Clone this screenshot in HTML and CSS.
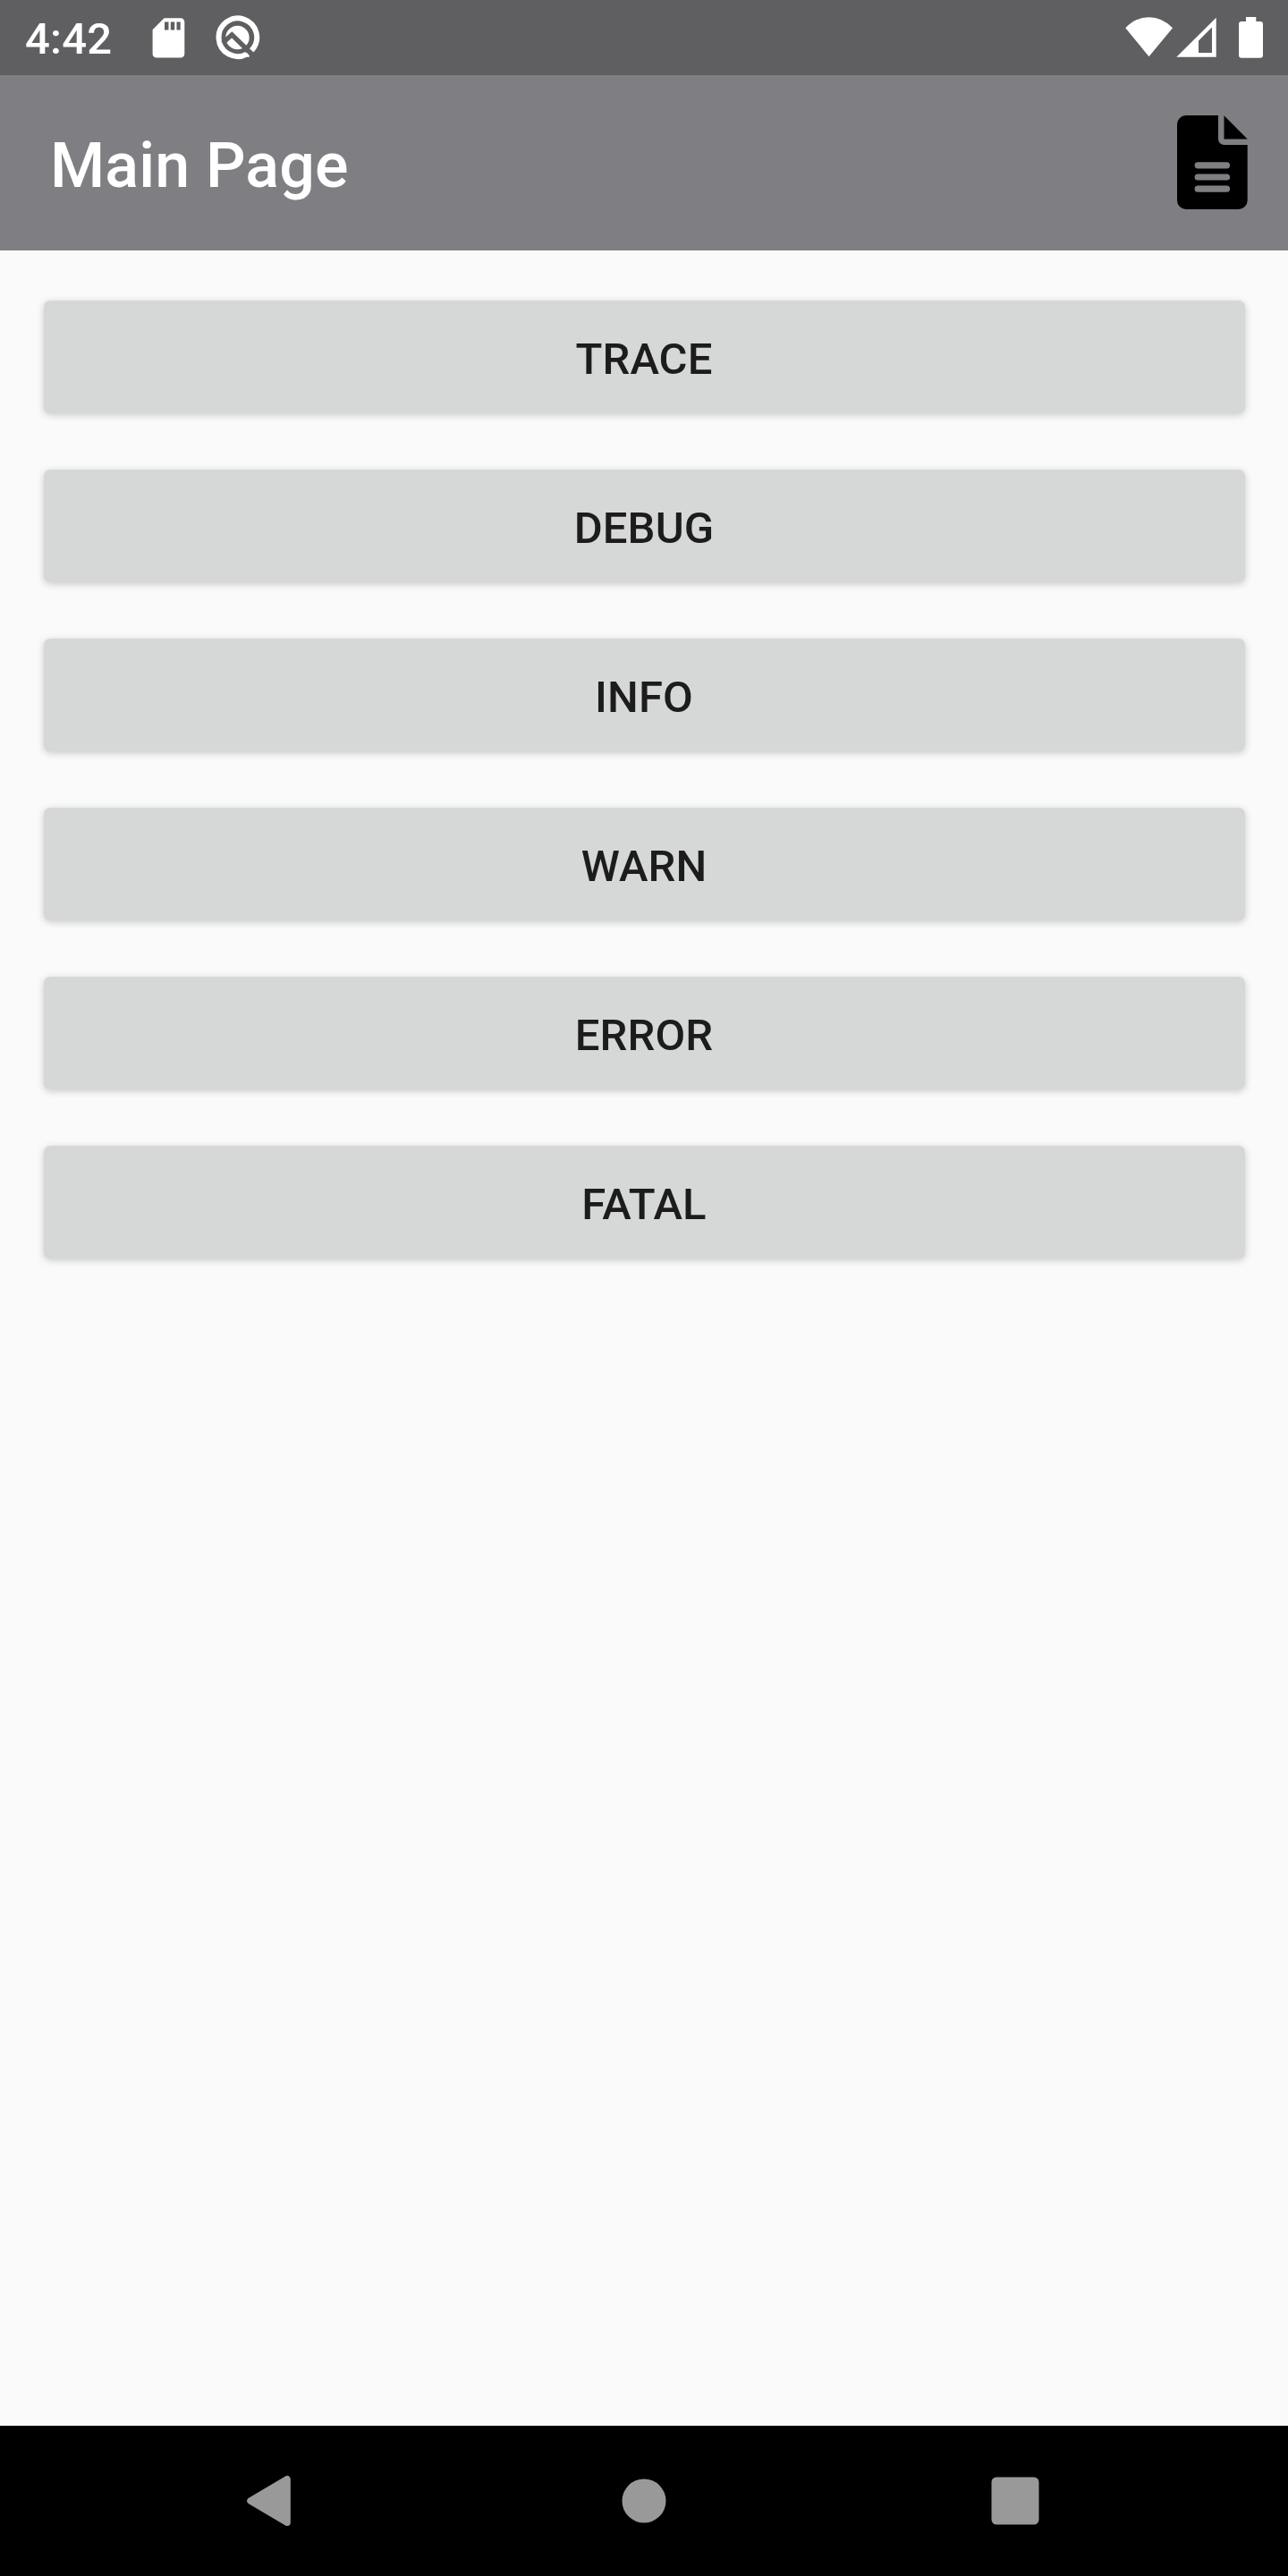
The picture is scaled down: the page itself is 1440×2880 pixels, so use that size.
FILE: index.html
```html
<!DOCTYPE html>
<html lang="en">
<head>
<meta charset="utf-8">
<title>Main Page</title>
<link rel="stylesheet" href="styles.css">
</head>
<body>
<div class="screen">
  <div class="status-bar">
    <span class="clock">4:42</span>
    <svg class="status-left" width="140" height="84" viewBox="160 0 140 84" fill="#fff">
      <path fill-rule="evenodd" d="M183.5 20.3H202a4.3 4.3 0 0 1 4.3 4.3V60.200a4.300 4.300 0 0 1-4.300 4.300H174.900a4.300 4.300 0 0 1-4.300-4.300V33.300zM184 24.500V33.500H188.500V24.500zM190.800 24.500V33.500H195.200V24.500zM197.500 24.500V33.500H201.700V24.500z"/>
      <path d="M275.800 60.600A21.300 21.300 0 1 1 281.700 56" fill="none" stroke="#fff" stroke-width="6"/>
      <path d="M275.200 59.300L278.200 63.500M278.700 54.400L283 58.500" fill="none" stroke="#fff" stroke-width="2.500"/>
      <circle cx="265.500" cy="42" r="13.200"/>
      <path d="M249 48L259.300 38.800L282 61" fill="none" stroke="#5f5f61" stroke-width="5.300"/>
    </svg>
    <svg class="status-right" width="170" height="84" viewBox="1250 0 170 84" fill="#fff">
      <path d="M1258.300 31.200Q1269.500 19.200 1284.500 19.200T1311 31.200L1284.500 63.300z"/>
      <path fill-rule="evenodd" d="M1315.300 63.700L1359.700 19.700V63.700zM1340 45.500V59H1355V30.500z"/>
      <path d="M1393 19H1404.300V24H1409a3 3 0 0 1 3 3V61.700a3 3 0 0 1-3 3H1388a3 3 0 0 1-3-3V27a3 3 0 0 1 3-3H1393z"/>
    </svg>
  </div>
  <header class="app-bar">
    <h1 class="title">Main Page</h1>
    <svg class="doc-icon" width="80" height="106" viewBox="1316 129 80 106">
      <path fill-rule="evenodd" d="M1326 129H1362V155.500A6.500 6.500 0 0 0 1368.500 162H1394.700V224A10 10 0 0 1 1384.700 234H1326A10 10 0 0 1 1316 224V139A10 10 0 0 1 1326 129zM1339.200 181.200a3.600 3.600 0 0 0 0 7.200H1371.500a3.600 3.600 0 0 0 0-7.200zM1339.200 194.400a3.600 3.600 0 0 0 0 7.200H1371.500a3.600 3.600 0 0 0 0-7.200zM1339.200 207.600a3.600 3.600 0 0 0 0 7.200H1371.500a3.600 3.600 0 0 0 0-7.200z"/>
      <path d="M1368.500 129.200L1394.700 155.400H1368.500z"/>
    </svg>
  </header>
  <main class="content">
    <button class="log-button">TRACE</button>
    <button class="log-button">DEBUG</button>
    <button class="log-button">INFO</button>
    <button class="log-button">WARN</button>
    <button class="log-button">ERROR</button>
    <button class="log-button">FATAL</button>
  </main>
  <nav class="nav-bar">
    <svg width="60" height="60" viewBox="5 0 60 60"><path d="M10 30L51 5.700V54.300z" fill="#999" stroke="#999" stroke-width="7.600" stroke-linejoin="round"/></svg>
    <svg width="60" height="60" viewBox="0 0 60 60"><circle cx="30" cy="30" r="24.500" fill="#999"/></svg>
    <svg width="60" height="60" viewBox="0 0 60 60"><rect x="3.500" y="3.500" width="53" height="53" rx="5.500" fill="#999"/></svg>
  </nav>
</div>
</body>
</html>
```
FILE: styles.css
```css
* {
  box-sizing: border-box;
}

body {
  margin: 0;
  font-family: Roboto, "Liberation Sans", sans-serif;
  font-weight: 500;
}

.screen {
  display: flex;
  flex-direction: column;
  width: 1440px;
  height: 2880px;
  background: #fafafa;
}

.status-bar {
  display: flex;
  align-items: center;
  height: 84px;
  padding: 0 20px 0 28px;
  background: #5f5f61;
  color: #fff;
}

.clock {
  width: 132px;
  font-size: 49px;
  letter-spacing: 0.2px;
  line-height: 56px;
  padding-top: 4px;
}

.status-right {
  margin-left: auto;
}

.app-bar {
  display: flex;
  align-items: center;
  justify-content: space-between;
  height: 196px;
  padding: 0 44px 0 56px;
  background: #7f7e82;
  color: #fff;
}

.title {
  margin: 6px 0 0;
  font-size: 70px;
  font-weight: 500;
  letter-spacing: 0.15px;
  line-height: 82px;
}

.doc-icon {
  display: block;
}

.content {
  display: flex;
  flex: 1;
  flex-direction: column;
  gap: 63px;
  padding: 56px 48.5px;
}

.log-button {
  height: 126px;
  padding: 6px 0 0;
  border: 0;
  border-radius: 7px;
  background: #d6d8d7;
  box-shadow: 0 2px 9px rgba(0, 0, 0, 0.2);
  color: #1c1c1c;
  font: inherit;
  font-size: 49px;
  letter-spacing: 0.1px;
  line-height: 58px;
}

.nav-bar {
  display: flex;
  align-items: center;
  justify-content: space-between;
  height: 168px;
  padding: 0 275px;
  background: #000;
}
```
